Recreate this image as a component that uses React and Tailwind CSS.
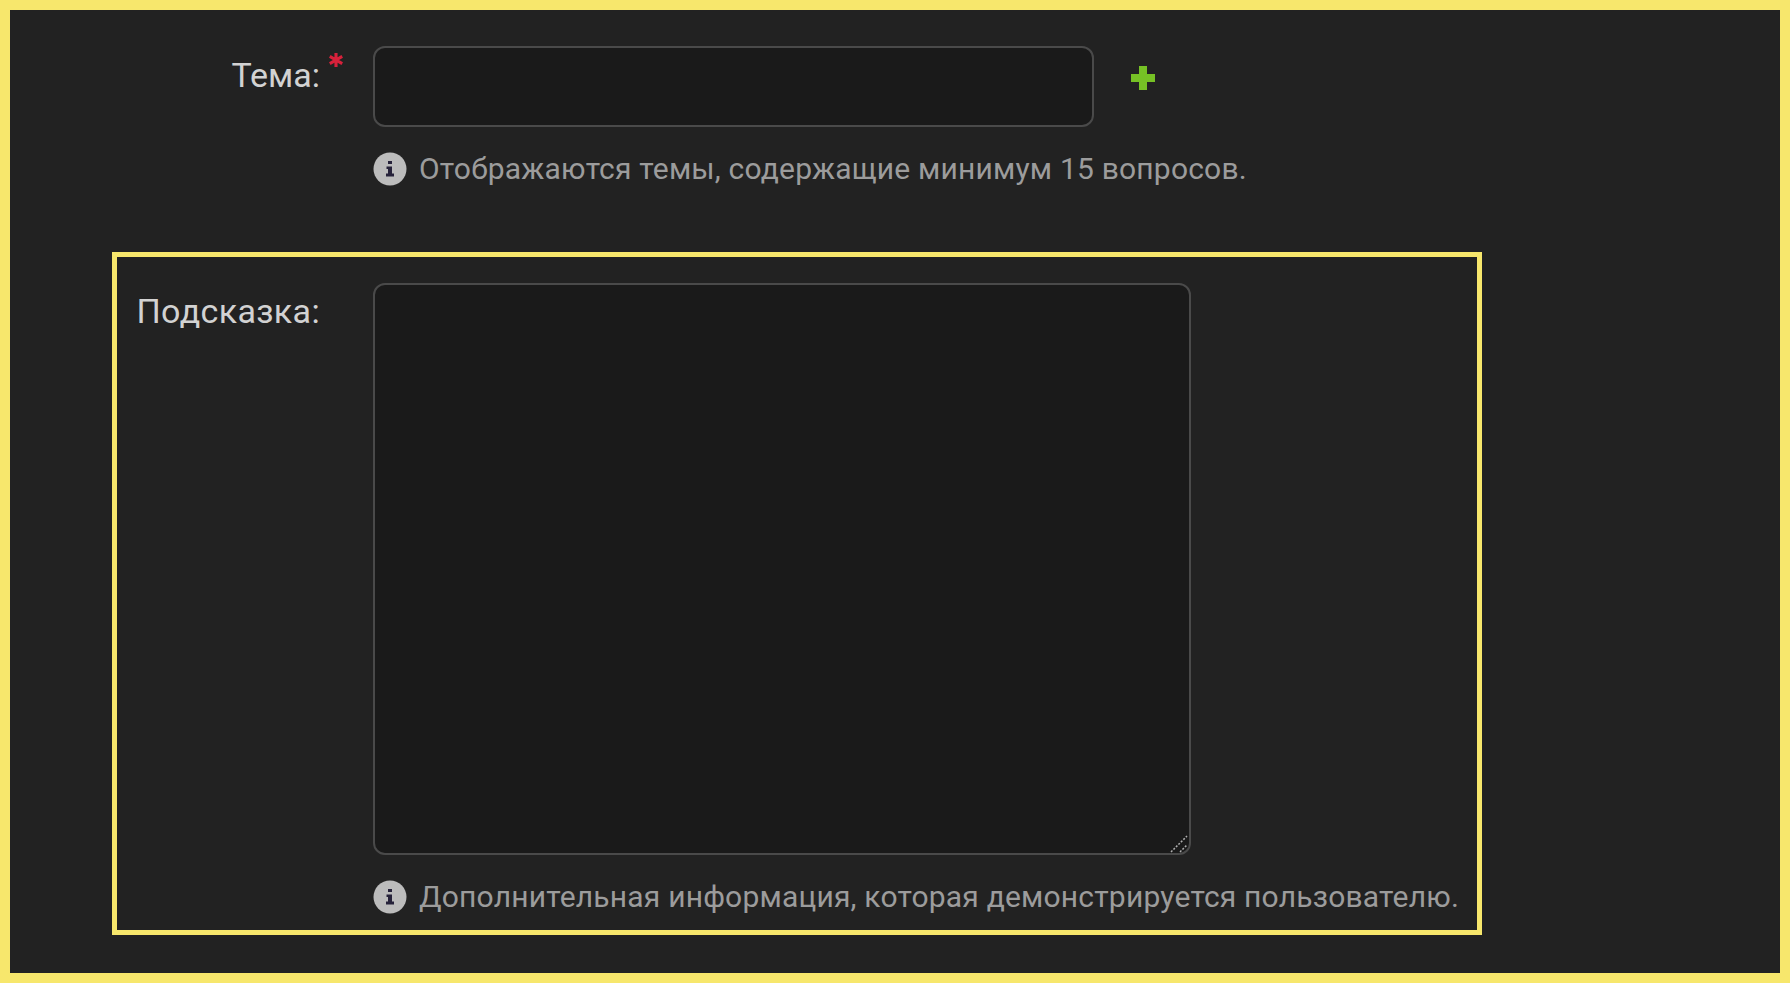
function InfoIcon() {
  return (
    <svg width="34" height="34" viewBox="0 0 34 34" className="shrink-0">
      <circle cx="17" cy="17" r="16.5" fill="#bcbcbc" />
      <path d="M15 9h4v3h-4zM13.5 14.5h5.5v7h2v3h-8v-3h2v-4.5h-1.5z" fill="#26223a" />
    </svg>
  );
}

function Hint({ children }) {
  return (
    <div className="flex items-center gap-[12px]">
      <InfoIcon />
      <span className="text-[30px] leading-[36px] tracking-[0.2px] text-[#9c9c9c] whitespace-nowrap font-['Roboto',sans-serif]">{children}</span>
    </div>
  );
}

export default function App() {
  return (
    <div className="h-[983px] border-[10px] border-[#f7e76c] bg-[#222222] pl-[102px] pt-[31px] font-['Roboto',sans-serif]">
      <div className="flex border-[5px] border-transparent">
        <div className="relative w-[256px] shrink-0 pr-[53px] pt-[4px] text-right">
          <label className="text-[34px] leading-[50px] text-[#d2d2d2]">Тема:</label>
          <svg width="16" height="16" viewBox="0 0 18 18" className="absolute left-[211px] top-[6px]">
            <path d="M9 1v16M2 5l14 8M16 5L2 13" stroke="#d8213b" strokeWidth="3.5" />
          </svg>
        </div>
        <div>
          <div className="flex items-start">
            <input className="h-[81px] w-[721px] rounded-[12px] border-2 border-[#4a4a4a] bg-[#1a1a1a]" />
            <svg width="26" height="26" viewBox="0 0 26 26" className="ml-[36px] mt-[19px]">
              <path d="M9 1h8v8h8v8h-8v8H9v-8H1V9h8z" fill="#76c125" />
            </svg>
          </div>
          <div className="mt-[24px]">
            <Hint>Отображаются темы, содержащие минимум 15 вопросов.</Hint>
          </div>
        </div>
      </div>
      <div className="mt-[60px] flex h-[683px] w-[1370px] border-[5px] border-[#f7e76c]">
        <div className="w-[256px] shrink-0 pr-[53px] pt-[29px] text-right">
          <label className="text-[34px] leading-[50px] tracking-[0.35px] text-[#d2d2d2]">Подсказка:</label>
        </div>
        <div className="pt-[26px]">
          <div className="relative w-fit">
            <textarea className="block h-[572px] w-[818px] resize-none rounded-[12px] border-2 border-[#4a4a4a] bg-[#1a1a1a]" />
            <svg width="18" height="18" viewBox="0 0 18 18" className="absolute bottom-[2px] right-[3px]">
              <path d="M1 17L17 1M10 17l7-7" stroke="#b0b0b0" strokeWidth="1.5" strokeDasharray="2 1.5" />
            </svg>
          </div>
          <div className="mt-[24px]">
            <Hint>Дополнительная информация, которая демонстрируется пользователю.</Hint>
          </div>
        </div>
      </div>
    </div>
  );
}
